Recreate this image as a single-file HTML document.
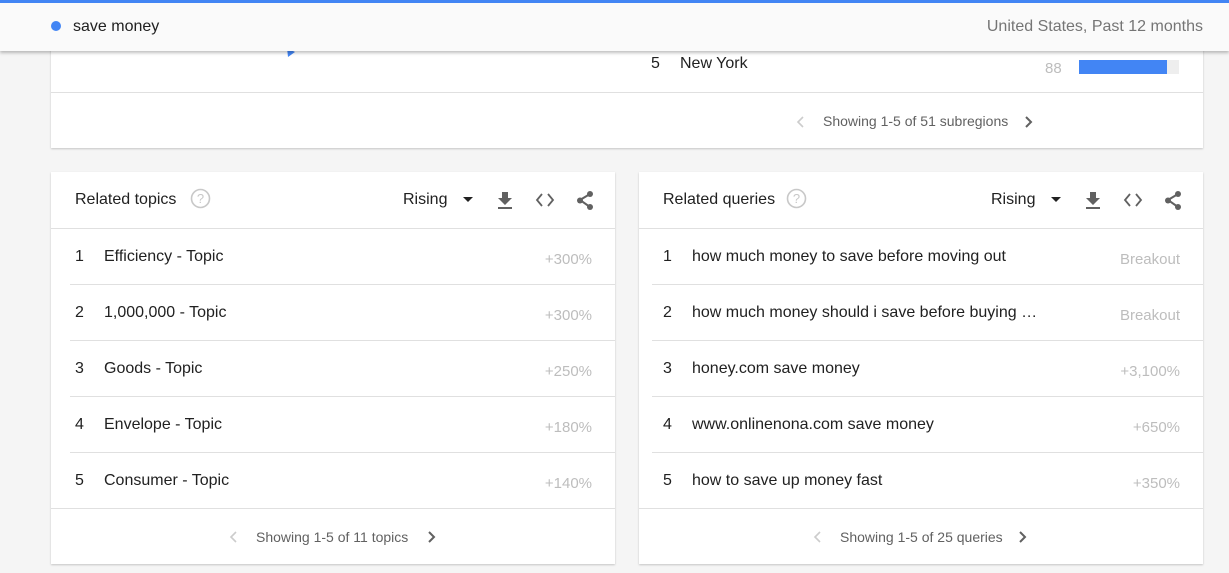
<!DOCTYPE html>
<html><head><style>
*{margin:0;padding:0;box-sizing:border-box}
body{width:1229px;height:573px;overflow:hidden;background:#f5f5f5;font-family:"Liberation Sans",Arial,sans-serif;position:relative;color:#212121}
.top{position:absolute;left:0;top:0;width:1229px;height:3px;background:#4285f4;z-index:3}
.hdr{position:absolute;left:0;top:3px;width:1229px;height:48px;background:#fafafa;box-shadow:0 2px 3px rgba(0,0,0,.25);z-index:2}
.dot{position:absolute;left:51px;top:18px;width:10px;height:10px;border-radius:50%;background:#4285f4}
.card{position:absolute;background:#fff;box-shadow:0 1px 2px rgba(0,0,0,.2)}
.abs{position:absolute;white-space:nowrap}
.line{position:absolute;height:1px;background:#e0e0e0}
.num{font-size:16px;color:#212121}
.val{font-size:15px;color:#bdbdbd}
.foot{font-size:14px;color:#616161}
</style></head><body>
<div class="top"></div>
<div class="hdr">
 <div class="dot"></div>
 <div class="abs" style="left:73px;top:15px;font-size:16px;color:#212121">save money</div>
 <div class="abs" style="right:26px;top:15px;font-size:16px;color:#757575">United States, Past 12 months</div>
</div>

<div class="card" style="left:51px;top:0;width:1152px;height:148px">
 <svg class="abs" style="left:236px;top:48px" width="8" height="10"><path d="M0 0L8 4L1 9Z" fill="#4285f4"/></svg>
 <div class="abs num" style="left:600px;top:55px">5</div>
 <div class="abs num" style="left:629px;top:55px">New York</div>
 <div class="abs val" style="left:994px;top:60px">88</div>
 <div class="abs" style="left:1028px;top:60px;width:100px;height:14px;background:#eee"></div>
 <div class="abs" style="left:1028px;top:60px;width:88px;height:14px;background:#4285f4"></div>
 <div class="line" style="left:0;top:92px;width:1152px"></div>
 <svg class="abs" style="left:745px;top:115px" width="10" height="14"><path d="M7 2L2 7L7 12" stroke="#ccc" stroke-width="1.6" fill="none"/></svg>
 <div class="abs foot" style="left:772px;top:113px">Showing 1-5 of 51 subregions</div>
 <svg class="abs" style="left:973px;top:115px" width="10" height="14"><path d="M2 2L7 7L2 12" stroke="#616161" stroke-width="2" fill="none"/></svg>
</div>

<!-- left card -->
<div class="card" style="left:51px;top:172px;width:564px;height:392px">
 <div class="abs" style="left:24px;top:19px;font-size:16px">Related topics</div>
 <svg class="abs" style="left:139px;top:16px" width="21" height="21"><circle cx="10.5" cy="10.5" r="9" stroke="#c8c8c8" stroke-width="1.6" fill="none"/><text x="10.5" y="15" font-size="13" text-anchor="middle" fill="#c8c8c8" font-family="Liberation Sans">?</text></svg>
 <div class="abs" style="left:352px;top:19px;font-size:16px">Rising</div>
 <svg class="abs" style="left:412px;top:25px" width="10" height="6"><path d="M0 0H10L5 5Z" fill="#212121"/></svg>
 <svg class="abs" style="left:445px;top:19px" width="18" height="19"><path d="M6 1H12V7H16L9 14L2 7H6Z" fill="#616161"/><rect x="2" y="16" width="14" height="2" fill="#616161"/></svg>
 <svg class="abs" style="left:484px;top:21px" width="20" height="14"><path d="M7 1L2 7L7 13M13 1L18 7L13 13" stroke="#616161" stroke-width="1.8" fill="none"/></svg>
 <svg class="abs" style="left:524px;top:18px" width="20" height="21"><path d="M15 4L5 10L15 17" stroke="#616161" stroke-width="2" fill="none"/><circle cx="15" cy="4" r="3" fill="#616161"/><circle cx="5" cy="10.5" r="3" fill="#616161"/><circle cx="15" cy="17" r="3" fill="#616161"/></svg>
 <div class="line" style="left:0;top:56px;width:564px"></div>
 <div class="abs num" style="left:24px;top:76px">1</div><div class="abs num" style="left:53px;top:76px">Efficiency - Topic</div><div class="abs val" style="right:23px;top:79px">+300%</div>
 <div class="line" style="left:19px;top:112px;width:545px"></div>
 <div class="abs num" style="left:24px;top:132px">2</div><div class="abs num" style="left:53px;top:132px">1,000,000 - Topic</div><div class="abs val" style="right:23px;top:135px">+300%</div>
 <div class="line" style="left:19px;top:168px;width:545px"></div>
 <div class="abs num" style="left:24px;top:188px">3</div><div class="abs num" style="left:53px;top:188px">Goods - Topic</div><div class="abs val" style="right:23px;top:191px">+250%</div>
 <div class="line" style="left:19px;top:224px;width:545px"></div>
 <div class="abs num" style="left:24px;top:244px">4</div><div class="abs num" style="left:53px;top:244px">Envelope - Topic</div><div class="abs val" style="right:23px;top:247px">+180%</div>
 <div class="line" style="left:19px;top:280px;width:545px"></div>
 <div class="abs num" style="left:24px;top:300px">5</div><div class="abs num" style="left:53px;top:300px">Consumer - Topic</div><div class="abs val" style="right:23px;top:303px">+140%</div>
 <div class="line" style="left:0;top:336px;width:564px"></div>
 <svg class="abs" style="left:178px;top:358px" width="10" height="14"><path d="M7 2L2 7L7 12" stroke="#ccc" stroke-width="1.6" fill="none"/></svg>
 <div class="abs foot" style="left:205px;top:357px">Showing 1-5 of 11 topics</div>
 <svg class="abs" style="left:376px;top:358px" width="10" height="14"><path d="M2 2L7 7L2 12" stroke="#616161" stroke-width="2" fill="none"/></svg>
</div>

<!-- right card -->
<div class="card" style="left:639px;top:172px;width:564px;height:392px">
 <div class="abs" style="left:24px;top:19px;font-size:16px">Related queries</div>
 <svg class="abs" style="left:147px;top:16px" width="21" height="21"><circle cx="10.5" cy="10.5" r="9" stroke="#c8c8c8" stroke-width="1.6" fill="none"/><text x="10.5" y="15" font-size="13" text-anchor="middle" fill="#c8c8c8" font-family="Liberation Sans">?</text></svg>
 <div class="abs" style="left:352px;top:19px;font-size:16px">Rising</div>
 <svg class="abs" style="left:412px;top:25px" width="10" height="6"><path d="M0 0H10L5 5Z" fill="#212121"/></svg>
 <svg class="abs" style="left:445px;top:19px" width="18" height="19"><path d="M6 1H12V7H16L9 14L2 7H6Z" fill="#616161"/><rect x="2" y="16" width="14" height="2" fill="#616161"/></svg>
 <svg class="abs" style="left:484px;top:21px" width="20" height="14"><path d="M7 1L2 7L7 13M13 1L18 7L13 13" stroke="#616161" stroke-width="1.8" fill="none"/></svg>
 <svg class="abs" style="left:524px;top:18px" width="20" height="21"><path d="M15 4L5 10L15 17" stroke="#616161" stroke-width="2" fill="none"/><circle cx="15" cy="4" r="3" fill="#616161"/><circle cx="5" cy="10.5" r="3" fill="#616161"/><circle cx="15" cy="17" r="3" fill="#616161"/></svg>
 <div class="line" style="left:0;top:56px;width:564px"></div>
 <div class="abs num" style="left:24px;top:76px">1</div><div class="abs num" style="left:53px;top:76px">how much money to save before moving out</div><div class="abs val" style="right:23px;top:79px">Breakout</div>
 <div class="line" style="left:13px;top:112px;width:551px"></div>
 <div class="abs num" style="left:24px;top:132px">2</div><div class="abs num" style="left:53px;top:132px">how much money should i save before buying …</div><div class="abs val" style="right:23px;top:135px">Breakout</div>
 <div class="line" style="left:13px;top:168px;width:551px"></div>
 <div class="abs num" style="left:24px;top:188px">3</div><div class="abs num" style="left:53px;top:188px">honey.com save money</div><div class="abs val" style="right:23px;top:191px">+3,100%</div>
 <div class="line" style="left:13px;top:224px;width:551px"></div>
 <div class="abs num" style="left:24px;top:244px">4</div><div class="abs num" style="left:53px;top:244px">www.onlinenona.com save money</div><div class="abs val" style="right:23px;top:247px">+650%</div>
 <div class="line" style="left:13px;top:280px;width:551px"></div>
 <div class="abs num" style="left:24px;top:300px">5</div><div class="abs num" style="left:53px;top:300px">how to save up money fast</div><div class="abs val" style="right:23px;top:303px">+350%</div>
 <div class="line" style="left:0;top:336px;width:564px"></div>
 <svg class="abs" style="left:174px;top:358px" width="10" height="14"><path d="M7 2L2 7L7 12" stroke="#ccc" stroke-width="1.6" fill="none"/></svg>
 <div class="abs foot" style="left:201px;top:357px">Showing 1-5 of 25 queries</div>
 <svg class="abs" style="left:379px;top:358px" width="10" height="14"><path d="M2 2L7 7L2 12" stroke="#616161" stroke-width="2" fill="none"/></svg>
</div>
</body></html>
